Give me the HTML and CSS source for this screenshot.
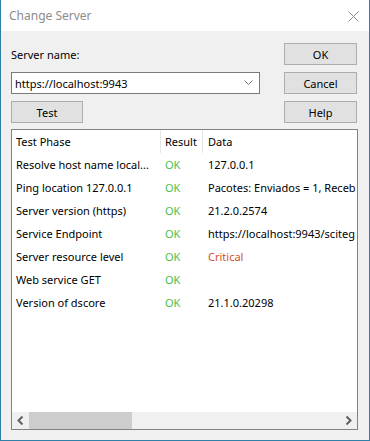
FILE: index.html
```html
<!DOCTYPE html>
<html lang="en">
<head>
  <meta charset="UTF-8" />
  <title>Change Server</title>
  <link rel="stylesheet" href="styles.css">
</head>
<body>
  <div class="window">
    <div class="titlebar">
      <span class="title">Change Server</span>
      <svg class="close" width="11" height="11" viewBox="0 0 11 11">
        <path d="M0.5 0.5 L10.5 10.5 M10.5 0.5 L0.5 10.5" stroke="#8c8c8c" stroke-width="1" fill="none"/>
      </svg>
    </div>

    <div class="content">
      <div class="form">
        <label class="label">Server name:</label>
        <button class="btn">OK</button>

        <div class="combo">
          <span>https://localhost:9943</span>
          <svg width="9" height="6" viewBox="0 0 9 6">
            <path d="M0.5 0.5 L4.5 4.5 L8.5 0.5" stroke="#707070" stroke-width="1" fill="none"/>
          </svg>
        </div>
        <button class="btn">Cancel</button>

        <button class="btn btn-test">Test</button>
        <button class="btn">Help</button>
      </div>

      <div class="panel">
        <div class="list">
          <div class="row head">
            <div class="col phase">Test Phase</div>
            <div class="col result">Result</div>
            <div class="col data">Data</div>
          </div>
          <div class="row">
            <div class="col phase">Resolve host name local...</div>
            <div class="col result ok">OK</div>
            <div class="col data">127.0.0.1</div>
          </div>
          <div class="row">
            <div class="col phase">Ping location 127.0.0.1</div>
            <div class="col result ok">OK</div>
            <div class="col data">Pacotes: Enviados = 1, Receb</div>
          </div>
          <div class="row">
            <div class="col phase">Server version (https)</div>
            <div class="col result ok">OK</div>
            <div class="col data">21.2.0.2574</div>
          </div>
          <div class="row">
            <div class="col phase">Service Endpoint</div>
            <div class="col result ok">OK</div>
            <div class="col data">https://localhost:9943/sciteg</div>
          </div>
          <div class="row">
            <div class="col phase">Server resource level</div>
            <div class="col result ok">OK</div>
            <div class="col data critical">Critical</div>
          </div>
          <div class="row">
            <div class="col phase">Web service GET</div>
            <div class="col result ok">OK</div>
            <div class="col data"></div>
          </div>
          <div class="row">
            <div class="col phase">Version of dscore</div>
            <div class="col result ok">OK</div>
            <div class="col data">21.1.0.20298</div>
          </div>
        </div>

        <div class="hscroll">
          <div class="arrow">
            <svg width="7" height="9" viewBox="0 0 7 9"><path d="M5.5 0.5 L1.5 4.5 L5.5 8.5" stroke="#606060" stroke-width="2" fill="none"/></svg>
          </div>
          <div class="track"><div class="thumb"></div></div>
          <div class="arrow">
            <svg width="7" height="9" viewBox="0 0 7 9"><path d="M1.5 0.5 L5.5 4.5 L1.5 8.5" stroke="#606060" stroke-width="2" fill="none"/></svg>
          </div>
        </div>
      </div>
    </div>
  </div>
</body>
</html>
```

FILE: styles.css
```css
body {
  margin: 0;
  font-family: 'Noto Sans', sans-serif;
  font-size: 11px;
  color: #000;
}

.window {
  width: 370px;
  height: 441px;
  box-sizing: border-box;
  border: 1px solid #2f7fa8;
  border-top: none;
  background: #f0f0f0;
  display: flex;
  flex-direction: column;
}

.titlebar {
  height: 31px;
  background: white;
  display: flex;
  align-items: center;
  justify-content: space-between;
  padding: 0 10px 0 8px;
}

.title {
  color: #8c8c8c;
  font-size: 12px;
}

.close {
  margin-top: 1px;
}

.content {
  padding: 12px 11px 0 10px;
  display: flex;
  flex-direction: column;
  gap: 6px;
}

.form {
  display: grid;
  grid-template-columns: 249px 73px;
  grid-auto-rows: 22px;
  column-gap: 24px;
  row-gap: 7px;
}

.label {
  display: flex;
  align-items: center;
}

.btn {
  font-family: inherit;
  font-size: 11px;
  color: #000;
  background: #e1e1e1;
  border: 1px solid #adadad;
  padding: 0;
  margin: 0;
}

.btn-test {
  width: 72px;
}

.combo {
  background: white;
  border: 1px solid #7a7a7a;
  display: flex;
  align-items: center;
  justify-content: space-between;
  padding: 0 6px 0 3px;
}

.panel {
  height: 301px;
  box-sizing: border-box;
  border: 1px solid #828282;
  background: white;
  display: flex;
  flex-direction: column;
  overflow: hidden;
}

.list {
  flex: 1;
}

.row {
  display: flex;
  height: 23px;
  white-space: nowrap;
}

.col {
  box-sizing: border-box;
  overflow: hidden;
  line-height: 23px;
}

.phase {
  width: 149px;
  padding-left: 4px;
}

.result {
  width: 42px;
  padding-left: 4px;
}

.data {
  flex: 1;
  padding-left: 5px;
}

.head .phase,
.head .result {
  border-right: 1px solid #e5e5e5;
}

.ok {
  color: #4cc04c;
}

.critical {
  color: #d2502e;
}

.hscroll {
  height: 17px;
  display: flex;
  background: #f0f0f0;
}

.arrow {
  width: 17px;
  display: flex;
  align-items: center;
  justify-content: center;
}

.track {
  flex: 1;
}

.thumb {
  width: 103px;
  height: 100%;
  background: #cdcdcd;
}
```
